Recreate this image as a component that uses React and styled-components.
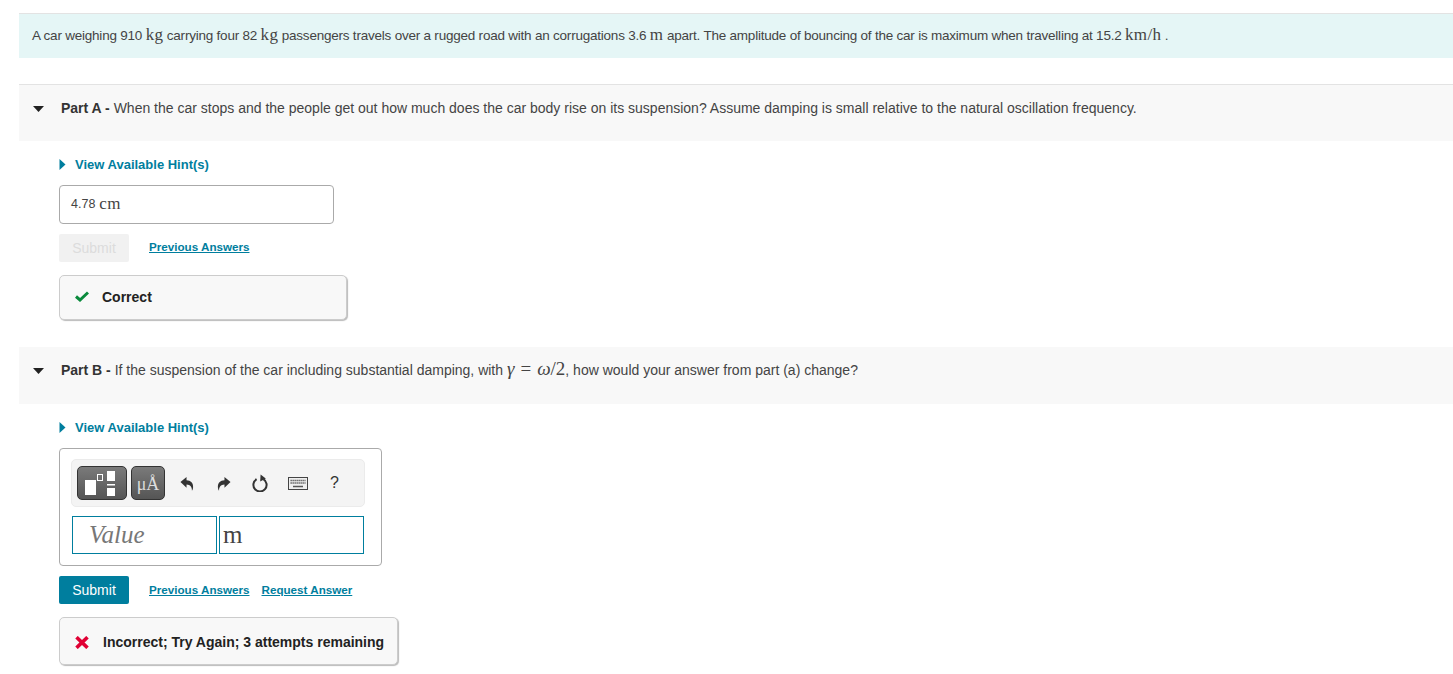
import React from 'react';
import styled, { createGlobalStyle } from 'styled-components';

const GlobalStyle = createGlobalStyle`
  html, body {
    margin: 0;
    padding: 0;
    background: #fff;
  }
  body {
    font-family: "Liberation Sans", Arial, sans-serif;
    font-size: 14px;
    color: #333;
  }
`;

const Arrow = ({ dir }) =>
  dir === 'down' ? (
    <svg width="11" height="6" viewBox="0 0 11 6">
      <path d="M0 0H11L5.5 6Z" fill="#222" />
    </svg>
  ) : (
    <svg width="7" height="11" viewBox="0 0 7 11">
      <path d="M0.5 0L6.5 5.5L0.5 11Z" fill="#007e9e" />
    </svg>
  );

const TemplateIcon = () => (
  <svg width="34" height="25" viewBox="0 0 34 25">
    <rect x="0" y="9" width="11" height="15" fill="#fff" />
    <rect x="12.5" y="3.5" width="5" height="6" fill="none" stroke="#fff" />
    <rect x="22" y="0" width="8" height="10" fill="#fff" />
    <rect x="22" y="13" width="8" height="1.5" fill="#fff" />
    <rect x="22" y="17" width="8" height="8" fill="#fff" />
  </svg>
);

const UndoIcon = ({ flip }) => (
  <svg width="14" height="15" viewBox="0 0 15 16" style={flip ? { transform: 'scaleX(-1)' } : undefined}>
    <path d="M0.5 6.5L7 1V4.5C11.5 4.5 14.5 7.5 14 12.5C13.8 14 13.2 15.3 12.8 15.7C13 12 11 9 7 9V12.5Z" fill="#333" />
  </svg>
);

const ResetIcon = () => (
  <svg width="17" height="18" viewBox="0 0 17 18">
    <path d="M11.4 5.2A6.6 6.6 0 1 1 4.6 5.2" fill="none" stroke="#333" strokeWidth="2" />
    <path d="M8.6 0.4L13.8 4.6L8.2 7.6Z" fill="#333" />
  </svg>
);

const KeyboardIcon = () => (
  <svg width="20" height="13" viewBox="0 0 20 13">
    <rect x="0.5" y="0.5" width="19" height="12" fill="#eee" stroke="#444" />
    <path d="M2.5 3.5H17.5M2.5 6H17.5" stroke="#555" strokeWidth="1.3" strokeDasharray="1.3 0.7" />
    <path d="M5 9.5H15" stroke="#555" strokeWidth="1.5" />
  </svg>
);

const CheckIcon = () => (
  <svg width="14" height="11" viewBox="0 0 14 11">
    <path d="M1 5.5L5 9L13 1.5" fill="none" stroke="#0a8a3c" strokeWidth="3" />
  </svg>
);

const CrossIcon = () => (
  <svg width="14" height="13" viewBox="0 0 14 13">
    <path d="M1.5 1.2L12.5 11.8M12.5 1.2L1.5 11.8" fill="none" stroke="#e00034" strokeWidth="3.6" />
  </svg>
);

const App = () => (
  <Page>
    <GlobalStyle />
    <Intro>
      A car weighing 910 <Unit>kg</Unit> carrying four 82 <Unit>kg</Unit> passengers travels over a rugged road with an
      corrugations 3.6 <Unit>m</Unit> apart. The amplitude of bouncing of the car is maximum when travelling at 15.2{' '}
      <Unit>km/h</Unit> .
    </Intro>

    <PartHeader $first>
      <Toggle>
        <Arrow dir="down" />
      </Toggle>
      <div>
        <strong>Part A -</strong> When the car stops and the people get out how much does the car body rise on its
        suspension? Assume damping is small relative to the natural oscillation frequency.
      </div>
    </PartHeader>
    <PartBody>
      <Hint>
        <Arrow dir="right" />
        View Available Hint(s)
      </Hint>
      <AnswerBox>
        4.78 <Unit>cm</Unit>
      </AnswerBox>
      <Actions>
        <SubmitButton disabled>Submit</SubmitButton>
        <ActionLink href="#" $lift={4}>
          Previous Answers
        </ActionLink>
      </Actions>
      <Feedback $width={288} $height={45} $gap={13} $nudge="0 0 2px 15px">
        <CheckIcon />
        Correct
      </Feedback>
    </PartBody>

    <PartHeader>
      <Toggle>
        <Arrow dir="down" />
      </Toggle>
      <div>
        <strong>Part B -</strong> If the suspension of the car including substantial damping, with{' '}
        <MathText>
          <i>γ</i>
          <MathOp>=</MathOp>
          <i>ω</i>/2
        </MathText>
        , how would your answer from part (a) change?
      </div>
    </PartHeader>
    <PartBody>
      <Hint>
        <Arrow dir="right" />
        View Available Hint(s)
      </Hint>
      <Editor>
        <Toolbar>
          <ToolButton $width={50}>
            <TemplateIcon />
          </ToolButton>
          <ToolButton $width={34}>
            <SymbolLabel>μÅ</SymbolLabel>
          </ToolButton>
          <PlainTools>
            <PlainTool>
              <UndoIcon />
            </PlainTool>
            <PlainTool>
              <UndoIcon flip />
            </PlainTool>
            <PlainTool>
              <ResetIcon />
            </PlainTool>
            <PlainTool>
              <KeyboardIcon />
            </PlainTool>
            <PlainTool>
              <Help>?</Help>
            </PlainTool>
          </PlainTools>
        </Toolbar>
        <Inputs>
          <ValueField>Value</ValueField>
          <UnitField>m</UnitField>
        </Inputs>
      </Editor>
      <Actions>
        <SubmitButton>Submit</SubmitButton>
        <ActionLink href="#" $lift={1}>
          Previous Answers
        </ActionLink>
        <ActionLink href="#" $lift={1}>
          Request Answer
        </ActionLink>
      </Actions>
      <Feedback $width={339} $height={48} $gap={14} $nudge="2px 0 0 15px">
        <CrossIcon />
        Incorrect; Try Again; 3 attempts remaining
      </Feedback>
    </PartBody>
  </Page>
);

export default App;

const Page = styled.div`
  padding: 13px 0 0 19px;
  height: 661px;
  overflow: hidden;
`;

const Intro = styled.div`
  box-sizing: border-box;
  height: 45px;
  padding: 14px 0 0 13px;
  margin-bottom: 26px;
  background: #e5f6f6;
  border-top: 1px solid #e3e3e3;
  line-height: 16px;
  font-size: 13.5px;
  letter-spacing: -0.22px;
  color: #444;
`;

const Unit = styled.span`
  font-family: "Liberation Serif", "DejaVu Serif", serif;
  font-size: 17px;
  line-height: 0;
  letter-spacing: 0.3px;
`;

const MathText = styled.span`
  font-family: "Liberation Serif", "DejaVu Serif", serif;
  font-size: 19px;
  line-height: 0;
`;

const MathOp = styled.span`
  margin: 0 6px;
`;

const PartHeader = styled.div`
  box-sizing: border-box;
  height: 57px;
  display: flex;
  padding-top: 15px;
  background: #f8f8f8;
  border-top: ${({ $first }) => ($first ? '1px solid #e3e3e3' : 'none')};
  line-height: 16px;
  color: #444;

  strong {
    color: #333;
  }
`;

const Toggle = styled.span`
  display: flex;
  width: 42px;
  justify-content: center;
  padding: 6px 4px 0 0;
  box-sizing: border-box;
`;

const PartBody = styled.div`
  padding: 15px 0 0 40px;
  margin-bottom: 27px;
`;

const Hint = styled.div`
  display: flex;
  align-items: center;
  gap: 9px;
  height: 16px;
  margin-bottom: 13px;
  color: #007e9e;
  font-weight: bold;
  font-size: 13px;
`;

const AnswerBox = styled.div`
  box-sizing: border-box;
  width: 275px;
  height: 39px;
  padding: 0 11px 2px;
  display: flex;
  align-items: center;
  gap: 4px;
  border: 1px solid #aaa;
  border-radius: 4px;
  font-size: 12.5px;
  color: #444;
  margin-bottom: 10px;
`;

const Actions = styled.div`
  display: flex;
  align-items: center;
  height: 28px;
  margin-bottom: 13px;
`;

const SubmitButton = styled.button`
  width: 70px;
  height: 28px;
  margin-right: 20px;
  padding: 0;
  border: none;
  border-radius: 2px;
  font-family: inherit;
  font-size: 14px;
  background: ${({ disabled }) => (disabled ? '#f1f1f1' : '#007e9e')};
  color: ${({ disabled }) => (disabled ? '#dcdcdc' : '#fff')};
`;

const ActionLink = styled.a`
  margin: 0 12px ${({ $lift }) => $lift}px 0;
  color: #007e9e;
  font-size: 11.65px;
  font-weight: bold;
`;

const Feedback = styled.div`
  box-sizing: border-box;
  width: ${({ $width }) => $width}px;
  height: ${({ $height }) => $height}px;
  display: flex;
  align-items: center;
  gap: ${({ $gap }) => $gap}px;
  padding: ${({ $nudge }) => $nudge};
  background: #f8f8f8;
  border: 1px solid #ccc;
  border-radius: 5px;
  box-shadow: 1px 1px 1px #bbb;
  font-size: 14px;
  font-weight: bold;
  color: #222;
`;

const Editor = styled.div`
  box-sizing: border-box;
  width: 323px;
  height: 118px;
  padding: 10px 16px 0 11px;
  margin-bottom: 10px;
  border: 1px solid #aaa;
  border-radius: 4px;
`;

const Toolbar = styled.div`
  box-sizing: border-box;
  height: 48px;
  display: flex;
  align-items: center;
  gap: 4px;
  padding: 0 5px;
  margin-bottom: 9px;
  background: #f4f4f4;
  border: 1px solid #ebebeb;
  border-radius: 5px;
`;

const ToolButton = styled.div`
  box-sizing: border-box;
  flex-shrink: 0;
  width: ${({ $width }) => $width}px;
  height: 34px;
  display: flex;
  align-items: center;
  justify-content: center;
  border: 1px solid #333;
  border-radius: 5px;
  background: linear-gradient(#7a7a7a, #555);
`;

const SymbolLabel = styled.span`
  font-family: "Liberation Serif", serif;
  font-size: 18px;
  color: #ddd;
  margin-top: 3px;
`;

const PlainTools = styled.div`
  display: flex;
  align-items: center;
  margin-left: -1px;
`;

const PlainTool = styled.div`
  width: 37px;
  display: flex;
  justify-content: center;
`;

const Help = styled.span`
  font-size: 16px;
  color: #333;
`;

const Inputs = styled.div`
  display: flex;
  gap: 2px;
  padding-left: 1px;
`;

const ValueField = styled.div`
  box-sizing: border-box;
  width: 145px;
  height: 38px;
  padding-left: 16px;
  border: 1px solid #007e9e;
  font-family: "Liberation Serif", serif;
  font-style: italic;
  font-size: 25px;
  line-height: 36px;
  color: #777;
`;

const UnitField = styled(ValueField)`
  padding-left: 3px;
  font-style: normal;
  color: #444;
`;
